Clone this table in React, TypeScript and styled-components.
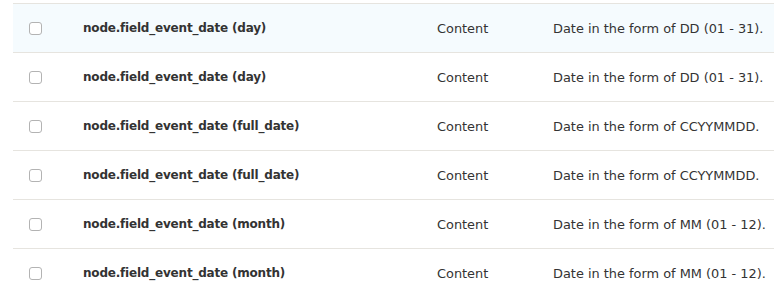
import React from "react";
import styled, { createGlobalStyle } from "styled-components";

const Global = createGlobalStyle`
  html, body { margin: 0; padding: 0; background: #fff; overflow: hidden; }
  body { font-family: "DejaVu Sans", "Liberation Sans", sans-serif; }
`;

const Page = styled.div`
  box-sizing: border-box;
  width: 100%;
  padding: 3px 0 0 13px;
`;

const Table = styled.div`
  border-top: 1px solid #e6e4df;
`;

const Row = styled.div<{ $highlight?: boolean }>`
  display: grid;
  grid-template-columns: 70px 354px 116px 1fr;
  align-items: center;
  height: 48px;
  border-bottom: 1px solid #e6e4df;
  background: ${(p) => (p.$highlight ? "#f5fbfe" : "#fff")};
  font-size: 12.9px;
  color: #333;
`;

const CheckCell = styled.div`
  padding-left: 16px;
  display: flex;
  align-items: center;
`;

const Box = styled.span`
  display: block;
  width: 11px;
  height: 11px;
  border: 1px solid #b3b3b3;
  border-radius: 3px;
  background: #fff;
`;

const Token = styled.div`
  font-weight: bold;
  font-size: 12px;
  letter-spacing: -0.2px;
  color: #333;
  white-space: nowrap;
`;

const Cell = styled.div`
  white-space: nowrap;
  overflow: hidden;
`;

const rows = [
  ["node.field_event_date (day)", "Date in the form of DD (01 - 31)."],
  ["node.field_event_date (day)", "Date in the form of DD (01 - 31)."],
  ["node.field_event_date (full_date)", "Date in the form of CCYYMMDD."],
  ["node.field_event_date (full_date)", "Date in the form of CCYYMMDD."],
  ["node.field_event_date (month)", "Date in the form of MM (01 - 12)."],
  ["node.field_event_date (month)", "Date in the form of MM (01 - 12)."],
];

export default function App() {
  return (
    <Page>
      <Global />
      <Table>
        {rows.map(([token, desc], i) => (
          <Row key={i} $highlight={i === 0}>
            <CheckCell>
              <Box />
            </CheckCell>
            <Token>{token}</Token>
            <Cell>Content</Cell>
            <Cell>{desc}</Cell>
          </Row>
        ))}
      </Table>
    </Page>
  );
}
